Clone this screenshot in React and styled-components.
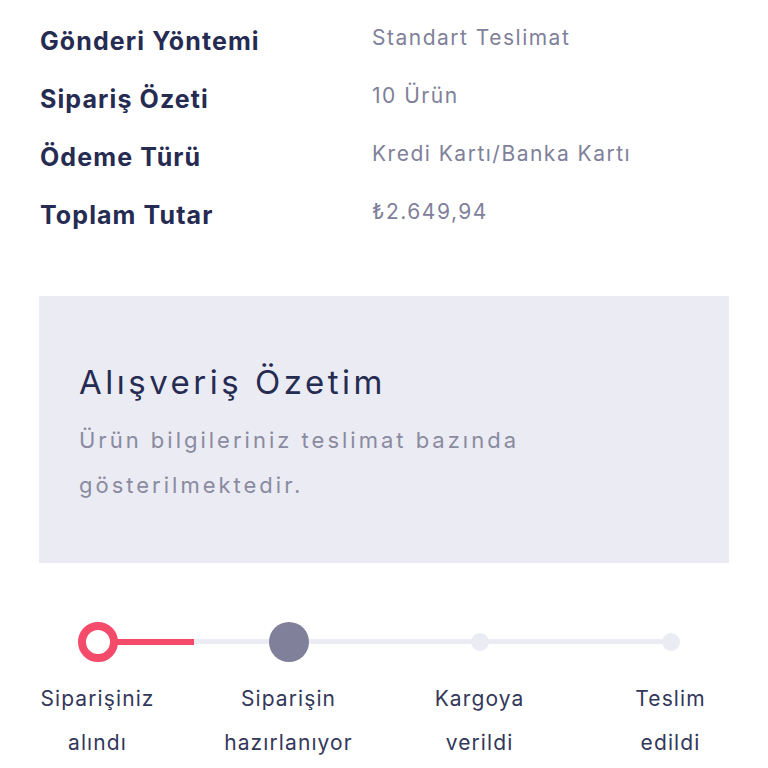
import React from "react";
import styled, { createGlobalStyle } from "styled-components";

const Global = createGlobalStyle`
  html, body { margin: 0; padding: 0; background: #ffffff; }
  body { font-family: Inter, "Noto Sans", sans-serif; -webkit-font-smoothing: antialiased; }
`;

const Page = styled.div`
  width: 768px;
  height: 768px;
  overflow: hidden;
  background: #fff;
`;

const Info = styled.div`
  display: grid;
  grid-template-columns: 332px 1fr;
  grid-auto-rows: 58px;
  padding: 12px 0 0 40px;
`;

const Label = styled.div`
  font-size: 25px;
  font-weight: 700;
  color: #262b52;
  display: flex;
  align-items: center;
  letter-spacing: 1.1px;
`;

const Value = styled.div`
  font-size: 21px;
  font-weight: 400;
  color: #80809a;
  display: flex;
  align-items: center;
  padding-bottom: 8px;
  letter-spacing: 1.5px;
`;

const Card = styled.section`
  margin: 52px 39px 0 39px;
  height: 267px;
  background: #ebebf3;
  padding: 64px 40px 0 40px;
  box-sizing: border-box;
`;

const Title = styled.h2`
  margin: 0;
  font-size: 33px;
  font-weight: 400;
  color: #262b52;
  line-height: 44px;
  letter-spacing: 3.5px;
`;

const Sub = styled.p`
  margin: 14px 0 0 0;
  font-size: 22px;
  line-height: 45px;
  color: #8a8aa0;
  max-width: 470px;
  letter-spacing: 3px;
`;

const Stepper = styled.div`
  margin-top: 59px;
  padding-left: 2px;
`;

const Track = styled.div`
  position: relative;
  display: grid;
  grid-template-columns: repeat(4, 191px);
  height: 40px;
  align-items: center;
  &::before {
    content: "";
    position: absolute;
    left: 96px;
    width: 574px;
    top: 17px;
    height: 5px;
    background: #ebebf3;
  }
`;

const Progress = styled.div`
  position: absolute;
  left: 96px;
  top: 17px;
  height: 6px;
  width: 96px;
  background: #f54b6a;
`;

const DotCell = styled.div`
  display: flex;
  justify-content: center;
  position: relative;
  z-index: 1;
`;

const Dot = styled.div`
  box-sizing: border-box;
  width: ${p => p.$size}px;
  height: ${p => p.$size}px;
  border-radius: 50%;
  background: ${p => p.$bg};
  border: ${p => (p.$ring ? `8px solid ${p.$ring}` : "none")};
`;

const Labels = styled.div`
  display: grid;
  grid-template-columns: repeat(4, 191px);
  margin-top: 15px;
`;

const StepLabel = styled.div`
  text-align: center;
  font-size: 21px;
  line-height: 44px;
  color: #33375a;
  letter-spacing: 1.1px;
`;

const rows = [
  ["Gönderi Yöntemi", "Standart Teslimat"],
  ["Sipariş Özeti", "10 Ürün"],
  ["Ödeme Türü", "Kredi Kartı/Banka Kartı"],
  ["Toplam Tutar", "₺2.649,94"],
];

const steps = [
  ["Siparişiniz", "alındı"],
  ["Siparişin", "hazırlanıyor"],
  ["Kargoya", "verildi"],
  ["Teslim", "edildi"],
];

export default function App() {
  return (
    <Page>
      <Global />
      <Info>
        {rows.map(([l, v]) => (
          <React.Fragment key={l}>
            <Label>{l}</Label>
            <Value>{v}</Value>
          </React.Fragment>
        ))}
      </Info>
      <Card>
        <Title>Alışveriş Özetim</Title>
        <Sub>Ürün bilgileriniz teslimat bazında gösterilmektedir.</Sub>
      </Card>
      <Stepper>
        <Track>
          <Progress />
          <DotCell><Dot $size={40} $bg="#ffffff" $ring="#f54b6a" /></DotCell>
          <DotCell><Dot $size={40} $bg="#80809a" /></DotCell>
          <DotCell><Dot $size={18} $bg="#ebebf3" /></DotCell>
          <DotCell><Dot $size={18} $bg="#ebebf3" /></DotCell>
        </Track>
        <Labels>
          {steps.map(([a, b]) => (
            <StepLabel key={a}>{a}<br />{b}</StepLabel>
          ))}
        </Labels>
      </Stepper>
    </Page>
  );
}
